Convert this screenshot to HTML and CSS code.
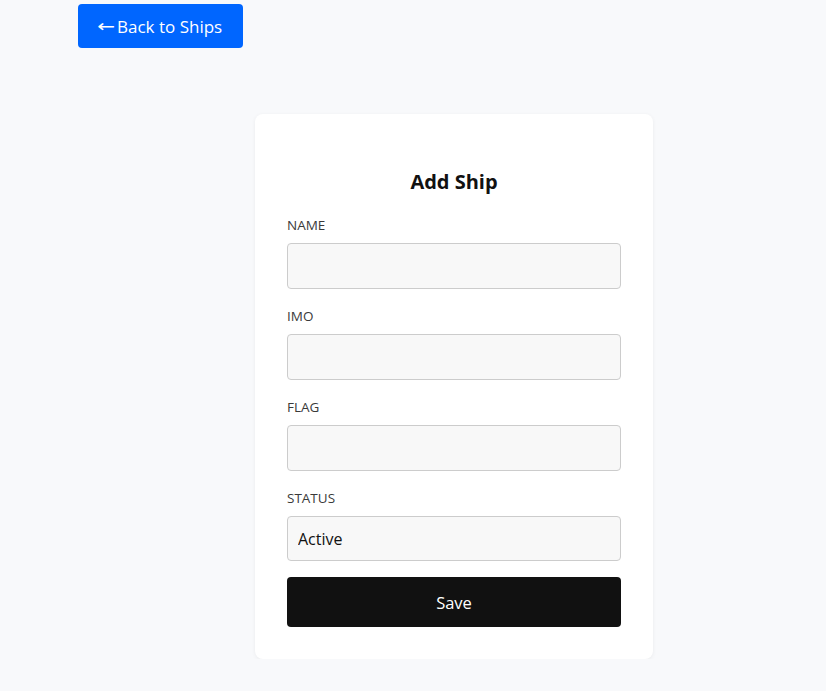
FILE: index.html
```html
<!DOCTYPE html>
<html lang="en">
<head>
<meta charset="utf-8">
<title>Add Ship</title>
<link rel="stylesheet" href="styles.css">
</head>
<body>
<div class="page">
  <button class="back-btn" type="button"><span class="arrow">&larr;</span> Back to Ships</button>
  <div class="form-wrap">
    <form class="card">
      <h2 class="title">Add Ship</h2>
      <div class="field">
        <label class="label">NAME</label>
        <input class="input" type="text">
      </div>
      <div class="field">
        <label class="label">IMO</label>
        <input class="input" type="text">
      </div>
      <div class="field">
        <label class="label">FLAG</label>
        <input class="input" type="text">
      </div>
      <div class="field">
        <label class="label">STATUS</label>
        <select class="input select">
          <option>Active</option>
          <option>Inactive</option>
        </select>
      </div>
      <button class="save-btn" type="button">Save</button>
    </form>
  </div>
</div>
</body>
</html>
```

FILE: styles.css
```css
* { box-sizing: border-box; }
html, body { margin: 0; padding: 0; }
body {
  background: #f8f9fb;
  font-family: "Open Sans", "Liberation Sans", sans-serif;
  color: #111;
}
.page {
  padding: 4px 0 0 78px;
}
.back-btn {
  display: flex;
  align-items: center;
  justify-content: center;
  gap: 4px;
  height: 44px;
  width: 165px;
  padding: 0;
  border: none;
  border-radius: 4px;
  background: #0066ff;
  color: #fff;
  font-family: inherit;
  font-size: 17px;
  cursor: pointer;
}
.arrow {
  font-family: "DejaVu Sans", sans-serif;
  font-size: 17px;
  transform: scaleX(1.25);
  display: inline-block;
}
.form-wrap {
  width: 752px;
  display: flex;
  justify-content: center;
  margin-top: 66px;
}
.card {
  width: 398px;
  background: #fff;
  border-radius: 8px;
  box-shadow: 0 1px 4px rgba(0,0,0,0.06);
  padding: 56px 32px 32px;
  display: flex;
  flex-direction: column;
}
.title {
  margin: 0 0 22px;
  text-align: center;
  font-size: 20px;
  font-weight: 700;
  line-height: 24px;
  color: #111;
}
.field {
  display: flex;
  flex-direction: column;
  margin-bottom: 18px;
}
.field:last-of-type { margin-bottom: 16px; }
.label {
  font-size: 13.5px;
  line-height: 18px;
  color: #3a3a3a;
  margin-bottom: 9px;
}
.input {
  height: 46px;
  width: 100%;
  border: 1px solid #ccc;
  border-radius: 4px;
  background: #f8f8f8;
  padding: 0 10px;
  font-family: inherit;
  font-size: 16px;
  color: #111;
}
.select {
  height: 45px;
  appearance: none;
  -webkit-appearance: none;
}
.save-btn {
  height: 50px;
  width: 100%;
  border: none;
  border-radius: 4px;
  background: #111;
  color: #fff;
  font-family: inherit;
  font-size: 16.5px;
  cursor: pointer;
}
```
